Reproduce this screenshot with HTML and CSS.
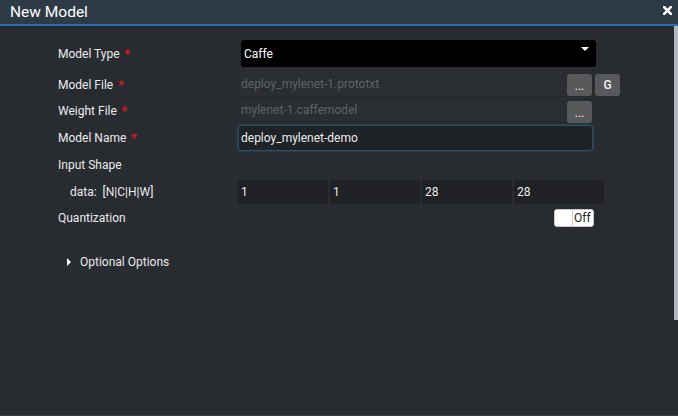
FILE: index.html
```html
<!DOCTYPE html>
<html>
<head>
<meta charset="utf-8">
<link rel="stylesheet" href="styles.css">
</head>
<body>
<div class="dialog">
  <header class="titlebar">
    <span class="title">New Model</span>
    <svg class="close" width="9" height="9" viewBox="0 0 9 9"><path d="M1.2 1.2 L7.8 7.8 M7.8 1.2 L1.2 7.8" stroke="#fff" stroke-width="2.6" stroke-linecap="square"/></svg>
  </header>
  <div class="body">
    <div class="form">
      <div class="row r-type">
        <label class="lbl">Model Type <span class="req">*</span></label>
        <div class="select">Caffe<span class="caret"></span></div>
      </div>
      <div class="row r-file">
        <label class="lbl">Model File <span class="req">*</span></label>
        <div class="file">deploy_mylenet-1.prototxt</div>
        <span class="btn">...</span>
        <span class="btn g">G</span>
      </div>
      <div class="row r-weight">
        <label class="lbl">Weight File <span class="req">*</span></label>
        <div class="file">mylenet-1.caffemodel</div>
        <span class="btn">...</span>
      </div>
      <div class="row r-name">
        <label class="lbl">Model Name <span class="req">*</span></label>
        <div class="text-input">deploy_mylenet-demo</div>
      </div>
      <div class="row r-shape">
        <label class="lbl">Input Shape</label>
      </div>
      <div class="row r-data">
        <label class="lbl sub">data:&nbsp; [N|C|H|W]</label>
        <div class="dims">
          <div class="dim">1</div>
          <div class="dim">1</div>
          <div class="dim">28</div>
          <div class="dim">28</div>
        </div>
      </div>
      <div class="row r-quant">
        <label class="lbl">Quantization</label>
        <div class="toggle-wrap">
          <div class="toggle"><span class="knob"></span><span class="off">Off</span></div>
        </div>
      </div>
      <div class="row r-opt">
        <span class="tri"></span><span class="opt">Optional Options</span>
      </div>
    </div>
  </div>
  <div class="scroll-thumb"></div>
</div>
</body>
</html>
```
FILE: styles.css
```css
html, body {
  margin: 0;
  padding: 0;
  background: #282c30;
}
body {
  width: 678px;
  height: 416px;
  overflow: hidden;
  font-family: Roboto, "Liberation Sans", sans-serif;
  font-size: 12px;
  color: #e2e4e6;
}
.dialog {
  position: relative;
  width: 678px;
  height: 416px;
  box-sizing: border-box;
  border-bottom: 1px solid #3a3e43;
}
.titlebar {
  height: 24px;
  background: #2e3a46;
  border-bottom: 2px solid #2b6db3;
  display: flex;
  align-items: center;
  justify-content: space-between;
  padding: 0 6px 0 10px;
}
.title {
  font-size: 15.5px;
  color: #ffffff;
  margin-top: 0;
}
.close {
  display: block;
  margin-top: -4px;
}
.form {
  padding: 14px 0 0 58px;
  display: flex;
  flex-direction: column;
}
.row {
  display: flex;
  align-items: center;
}
.lbl {
  width: 180px;
  flex: none;
  color: #e8eaec;
}
.req {
  color: #e8141e;
  font-weight: bold;
  margin-left: 2px;
}
.r-type { height: 27px; }
.r-file { height: 25px; margin-top: 5px; }
.r-weight { height: 25px; margin-top: 1px; }
.r-name { height: 26px; margin-top: 2px; }
.r-shape { height: 20px; margin-top: 4px; }
.r-data { height: 24px; margin-top: 5px; }
.r-quant { height: 18px; margin-top: 5px; }
.r-opt { height: 20px; margin-top: 25px; padding-left: 9px; }

.select {
  position: relative;
  margin-left: 3px;
  width: 355px;
  height: 27px;
  box-sizing: border-box;
  background: #000;
  border-radius: 3px;
  color: #fff;
  padding: 0 0 0 3px;
  display: flex;
  align-items: center;
}
.caret {
  position: absolute;
  right: 7px;
  top: 7px;
  width: 0;
  height: 0;
  border-left: 4px solid transparent;
  border-right: 4px solid transparent;
  border-top: 4px solid #fff;
}
.file {
  width: 329px;
  height: 25px;
  box-sizing: border-box;
  background: #2a2e32;
  border-bottom: 1px solid #25282b;
  color: #5e6368;
  padding-left: 3px;
  display: flex;
  align-items: center;
}
.btn {
  width: 25px;
  height: 22px;
  margin-left: 0;
  border-radius: 3px;
  background: #58595b;
  color: #f0f0f0;
  display: flex;
  align-items: center;
  justify-content: center;
  font-size: 12px;
  box-sizing: border-box;
  padding-top: 2px;
}
.r-weight .btn { margin-top: 3px; }
.btn.g {
  margin-left: 3px;
  padding-top: 0;
  font-weight: 500;
}
.text-input {
  width: 355px;
  height: 26px;
  box-sizing: border-box;
  background: #1f2226;
  border: 1px solid #2e5068;
  border-radius: 3px;
  box-shadow: 0 0 3px rgba(70, 130, 180, 0.45);
  color: #ececec;
  padding-left: 2px;
  display: flex;
  align-items: center;
}
.lbl.sub { padding-left: 12px; box-sizing: border-box; }
.dims {
  display: flex;
  gap: 2px;
}
.dim {
  width: 90px;
  height: 24px;
  box-sizing: border-box;
  background: #1f2124;
  border-radius: 2px;
  color: #ececec;
  padding-left: 3px;
  display: flex;
  align-items: center;
}
.toggle-wrap {
  width: 356px;
  display: flex;
  justify-content: flex-end;
}
.toggle {
  width: 40px;
  height: 18px;
  box-sizing: border-box;
  background: #ffffff;
  border: 1px solid #c8c8c8;
  border-radius: 3px;
  display: flex;
  overflow: hidden;
}
.knob {
  width: 17px;
  border-right: 1px solid #cfcfcf;
  background: #fff;
}
.off {
  flex: 1;
  color: #222;
  font-size: 12px;
  display: flex;
  align-items: center;
  padding-left: 1px;
}
.tri {
  width: 0;
  height: 0;
  border-top: 4px solid transparent;
  border-bottom: 4px solid transparent;
  border-left: 4px solid #fff;
  margin-right: 9px;
}
.opt { color: #e8eaec; }
.scroll-thumb {
  position: absolute;
  right: 0;
  top: 26px;
  width: 4px;
  height: 294px;
  background: #b2b6be;
}
```
